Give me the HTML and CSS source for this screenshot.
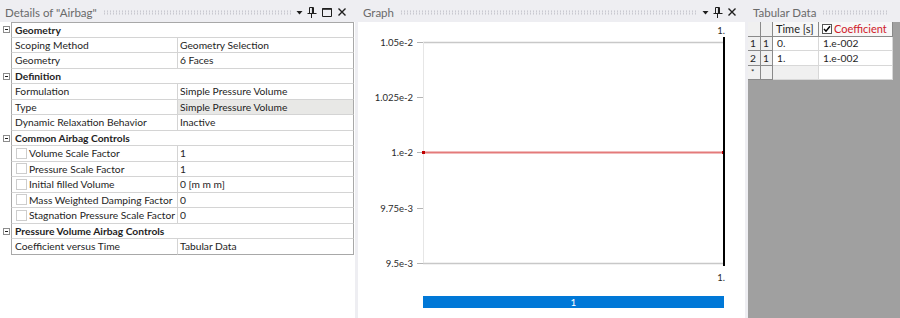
FILE: index.html
```html
<!DOCTYPE html>
<html lang="en">
<head>
    <meta charset="UTF-8">
    <title>Details of "Airbag"</title>
    <link rel="stylesheet" href="styles.css">
</head>
<body>
    <div class="app">
        <!-- details -->
        <section class="panel panel-details">
            <header class="panel-title">
                <span class="title-text">Details of "Airbag"</span>
                <span class="grip"></span>
                <span class="tools">
                    <svg class="ico-drop" width="7" height="12" viewBox="0 0 7 12"><path d="M0.5 5h6l-3 3.5z" fill="#1e1e1e"/></svg>
                    <svg class="ico-pin" width="10" height="12" viewBox="0 0 10 12"><path d="M2.5 1.5h4v6h-4z" fill="none" stroke="#1e1e1e"/><path d="M5.5 1.5v6" stroke="#1e1e1e" stroke-width="1.2"/><path d="M0.5 7.5h9" stroke="#1e1e1e"/><path d="M4.5 8v4" stroke="#1e1e1e"/></svg>
                    <svg class="ico-max" width="12" height="12" viewBox="0 0 12 12"><path d="M1.5 2.5h9v8h-9z" fill="none" stroke="#1e1e1e"/><path d="M1.5 3h9" stroke="#1e1e1e" stroke-width="1.6"/></svg>
                    <svg class="ico-close" width="10" height="12" viewBox="0 0 10 12"><path d="M1.5 2.5l7 7M8.5 2.5l-7 7" stroke="#1e1e1e" stroke-width="1.4"/></svg>
                </span>
            </header>
            <div class="panel-body">
                <div class="tree">
                    <div class="row cat"><span class="gutter"><i class="minus"></i></span><span class="cell span">Geometry</span></div>
                    <div class="row"><span class="gutter"></span><span class="cell name">Scoping Method</span><span class="cell value">Geometry Selection</span></div>
                    <div class="row"><span class="gutter"></span><span class="cell name">Geometry</span><span class="cell value">6 Faces</span></div>

                    <div class="row cat"><span class="gutter"><i class="minus"></i></span><span class="cell span">Definition</span></div>
                    <div class="row"><span class="gutter"></span><span class="cell name">Formulation</span><span class="cell value">Simple Pressure Volume</span></div>
                    <div class="row"><span class="gutter"></span><span class="cell name">Type</span><span class="cell value readonly">Simple Pressure Volume</span></div>
                    <div class="row"><span class="gutter"></span><span class="cell name">Dynamic Relaxation Behavior</span><span class="cell value">Inactive</span></div>

                    <div class="row cat"><span class="gutter"><i class="minus"></i></span><span class="cell span">Common Airbag Controls</span></div>
                    <div class="row"><span class="gutter"></span><span class="cell name"><i class="check"></i>Volume Scale Factor</span><span class="cell value">1</span></div>
                    <div class="row"><span class="gutter"></span><span class="cell name"><i class="check"></i>Pressure Scale Factor</span><span class="cell value">1</span></div>
                    <div class="row"><span class="gutter"></span><span class="cell name"><i class="check"></i>Initial filled Volume</span><span class="cell value">0 [m m m]</span></div>
                    <div class="row"><span class="gutter"></span><span class="cell name"><i class="check"></i>Mass Weighted Damping Factor</span><span class="cell value">0</span></div>
                    <div class="row"><span class="gutter"></span><span class="cell name"><i class="check"></i>Stagnation Pressure Scale Factor</span><span class="cell value">0</span></div>

                    <div class="row cat"><span class="gutter"><i class="minus"></i></span><span class="cell span">Pressure Volume Airbag Controls</span></div>
                    <div class="row"><span class="gutter"></span><span class="cell name">Coefficient versus Time</span><span class="cell value">Tabular Data</span></div>
                </div>
            </div>
        </section>

        <!-- graph -->
        <section class="panel panel-graph">
            <header class="panel-title">
                <span class="title-text">Graph</span>
                <span class="grip"></span>
                <span class="tools">
                    <svg class="ico-drop" width="7" height="12" viewBox="0 0 7 12"><path d="M0.5 5h6l-3 3.5z" fill="#1e1e1e"/></svg>
                    <svg class="ico-pin" width="10" height="12" viewBox="0 0 10 12"><path d="M2.5 1.5h4v6h-4z" fill="none" stroke="#1e1e1e"/><path d="M5.5 1.5v6" stroke="#1e1e1e" stroke-width="1.2"/><path d="M0.5 7.5h9" stroke="#1e1e1e"/><path d="M4.5 8v4" stroke="#1e1e1e"/></svg>
                    <svg class="ico-close" width="10" height="12" viewBox="0 0 10 12"><path d="M1.5 2.5l7 7M8.5 2.5l-7 7" stroke="#1e1e1e" stroke-width="1.4"/></svg>
                </span>
            </header>
            <div class="panel-body">
                <svg class="chart" width="387" height="296" viewBox="0 0 387 296">
                    <g class="axis-labels">
                        <text x="55" y="24">1.05e-2</text>
                        <text x="55" y="79">1.025e-2</text>
                        <text x="55" y="134">1.e-2</text>
                        <text x="55" y="190">9.75e-3</text>
                        <text x="55" y="245">9.5e-3</text>
                    </g>
                    <g stroke="#b4b4b4" stroke-width="1">
                        <path d="M59 20.5h6M59 75.5h6M59 130.5h6M59 186.5h6M59 241.5h6"/>
                        <path d="M65 20.5h301M65 241.5h301" stroke="#c8c8c8" stroke-width="1.5"/>
                        <path d="M65.5 20v221" stroke="#e6e6e6"/>
                    </g>
                    <path d="M65 130.5h301" stroke="#e47a7a" stroke-width="2"/>
                    <rect x="64" y="129" width="3" height="3" fill="#c00000"/>
                    <rect x="364" y="129" width="3" height="3" fill="#c00000"/>
                    <rect x="365" y="15" width="2" height="229" fill="#000"/>
                    <text class="x-label" x="367" y="12">1.</text>
                    <text class="x-label" x="367" y="259">1.</text>
                    <rect x="65" y="274" width="301" height="12" fill="#0078d7"/>
                    <text class="bar-label" x="215.5" y="284">1</text>
                </svg>
            </div>
        </section>

        <!-- tabular data -->
        <section class="panel panel-table">
            <header class="panel-title">
                <span class="title-text">Tabular Data</span>
                <span class="grip"></span>
            </header>
            <div class="panel-body gray">
                <div class="grid">
                    <span class="hd"></span><span class="hd"></span><span class="hd col">Time [s]</span><span class="hd col coef"><i class="check on"><svg width="8" height="8" viewBox="0 0 8 8"><path d="M1 4l2 2.2 4-5" fill="none" stroke="#000" stroke-width="1.5"/></svg></i>Coefficient</span>
                    <span class="hd">1</span><span class="hd">1</span><span class="td">0.</span><span class="td">1.e-002</span>
                    <span class="hd">2</span><span class="hd">1</span><span class="td">1.</span><span class="td">1.e-002</span>
                    <span class="hd star">*</span><span class="hd"></span><span class="td new"></span><span class="td"></span>
                </div>
            </div>
        </section>
    </div>
</body>
</html>
```

FILE: styles.css
```css
* {
    margin: 0;
    padding: 0;
    box-sizing: border-box;
}

body {
    background: #eeeef2;
    font-family: Lato, "Noto Sans", sans-serif;
    font-size: 10.25px;
    color: #1e1e1e;
}

.app {
    display: flex;
    height: 318px;
    padding-top: 2px;
    gap: 3px;
    overflow: hidden;
}

.panel {
    display: flex;
    flex-direction: column;
}

.panel-details {
    width: 355px;
}

.panel-graph {
    width: 387px;
}

.panel-table {
    flex: 1;
}

.panel-title {
    height: 20px;
    display: flex;
    align-items: center;
    padding: 0 8px 0 5px;
    color: #6a6a6a;
    font-size: 11.5px;
    white-space: nowrap;
}

.grip {
    flex: 1;
    height: 5px;
    margin: 0 5px 0 6px;
    background-image: radial-gradient(circle, #c2c2ca 0.75px, transparent 0.9px);
    background-size: 3px 2.5px;
}

.tools {
    display: flex;
    align-items: center;
    gap: 4px;
}

.panel-body {
    flex: 1;
    background: #fff;
}

.panel-body.gray {
    background: #a0a0a0;
}

/* details tree */
.tree {
    width: 354px;
}

.row {
    display: flex;
    height: 15.5px;
}

.gutter {
    width: 11px;
    flex: none;
    display: flex;
    align-items: center;
    padding-left: 3px;
}

.minus {
    width: 7px;
    height: 7px;
    border: 1px solid #8c8c8c;
    position: relative;
}

.minus::after {
    content: "";
    position: absolute;
    left: 1px;
    right: 1px;
    top: 2px;
    height: 1px;
    background: #1e1e1e;
}

.cell {
    display: flex;
    align-items: center;
    white-space: nowrap;
    border-bottom: 1px solid #d4d4d4;
}

.cell.name {
    width: 166px;
    flex: none;
    padding-left: 3px;
    border-left: 1px solid #a8a8a8;
}

.cell.value {
    flex: 1;
    padding-left: 2px;
    border-left: 1px solid #d4d4d4;
    border-right: 1px solid #a8a8a8;
}

.cell.readonly {
    background: #e8e8e6;
}

.cell.span {
    flex: 1;
    padding-left: 3px;
    font-weight: bold;
    border-left: 1px solid #a8a8a8;
    border-right: 1px solid #a8a8a8;
}

.row:first-child .cell {
    border-top: 1px solid #a8a8a8;
}

.row:last-child .cell {
    border-bottom-color: #a8a8a8;
}

.check {
    width: 11px;
    height: 11px;
    flex: none;
    border: 1px solid #cdcdcd;
    background: #fff;
    margin: 0 2px 0 1px;
    display: flex;
    align-items: center;
    justify-content: center;
}

/* graph */
.chart {
    display: block;
}

.chart text {
    font-family: Lato, "Noto Sans", sans-serif;
    font-size: 9.5px;
    fill: #2a2a2a;
}

.axis-labels text,
.chart .x-label {
    text-anchor: end;
}

.chart .bar-label {
    fill: #fff;
    font-size: 10px;
    text-anchor: middle;
}

/* tabular data */
.grid {
    display: grid;
    grid-template-columns: 13px 12px 46px 74px;
    grid-auto-rows: 14.5px;
    background: #fff;
    width: 145px;
}

.grid span {
    display: flex;
    align-items: center;
    padding-left: 2px;
    white-space: nowrap;
    border-right: 1px solid #8a8a8a;
    border-bottom: 1px solid #8a8a8a;
}

.grid .hd {
    background: #f0f0f0;
}

.grid .col {
    background: #f7f7f7;
    padding-left: 3px;
    font-size: 11px;
}

.grid .coef {
    color: #d0202a;
}

.grid .td {
    border-right-color: #d8d8d8;
    border-bottom-color: #d8d8d8;
    padding-left: 4px;
}

.grid .td.new {
    background: #f0f0f0;
}

.grid .star {
    font-size: 8px;
    padding-left: 3px;
}

.check.on {
    width: 10px;
    height: 10px;
    border-color: #555;
    margin: 0 2px 0 0;
}
```
